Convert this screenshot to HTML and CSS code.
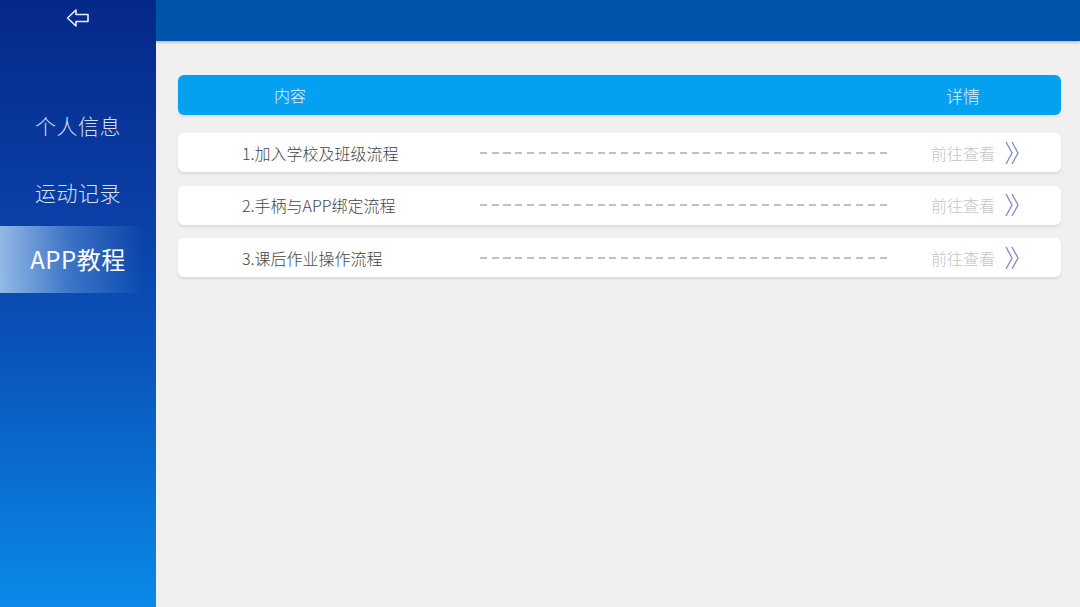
FILE: index.html
```html
<!DOCTYPE html>
<html lang="zh">
<head>
<meta charset="utf-8">
<title>APP教程</title>
<link rel="stylesheet" href="styles.css">
</head>
<body>
<div class="app">
  <aside class="sidebar">
    <div class="back">
      <svg width="24" height="20" viewBox="0 0 24 20" aria-hidden="true">
        <path d="M1.5 10 L10 2 L10 6.5 L22 6.5 L22 13.5 L10 13.5 L10 18 Z" fill="none" stroke="#e8eefa" stroke-width="1.6" stroke-linejoin="round"/>
      </svg>
    </div>
    <nav class="menu">
      <div class="menu-item">个人信息</div>
      <div class="menu-item">运动记录</div>
      <div class="menu-item active">APP教程</div>
    </nav>
  </aside>
  <main class="main">
    <header class="topbar"></header>
    <section class="content">
      <div class="table-head">
        <div class="col-title">内容</div>
        <div class="spacer"></div>
        <div class="col-detail">详情</div>
      </div>
      <div class="rows">
        <div class="row">
          <div class="row-title">1.加入学校及班级流程</div>
          <div class="dashes"></div>
          <div class="row-link">前往查看</div>
          <svg class="chev" width="16" height="26" viewBox="0 0 16 26" aria-hidden="true">
            <path d="M2 2 L8 13 L2 24 M8 2 L14 13 L8 24" fill="none" stroke="#7f88c2" stroke-width="1.3"/>
          </svg>
        </div>
        <div class="row">
          <div class="row-title">2.手柄与APP绑定流程</div>
          <div class="dashes"></div>
          <div class="row-link">前往查看</div>
          <svg class="chev" width="16" height="26" viewBox="0 0 16 26" aria-hidden="true">
            <path d="M2 2 L8 13 L2 24 M8 2 L14 13 L8 24" fill="none" stroke="#7f88c2" stroke-width="1.3"/>
          </svg>
        </div>
        <div class="row">
          <div class="row-title">3.课后作业操作流程</div>
          <div class="dashes"></div>
          <div class="row-link">前往查看</div>
          <svg class="chev" width="16" height="26" viewBox="0 0 16 26" aria-hidden="true">
            <path d="M2 2 L8 13 L2 24 M8 2 L14 13 L8 24" fill="none" stroke="#7f88c2" stroke-width="1.3"/>
          </svg>
        </div>
      </div>
    </section>
  </main>
</div>
</body>
</html>
```

FILE: styles.css
```css
* { box-sizing: border-box; }

html, body {
  margin: 0;
  padding: 0;
  width: 1080px;
  height: 607px;
  overflow: hidden;
  font-family: "Noto Sans CJK SC", "Noto Sans", sans-serif;
  font-weight: 300;
  background: #f0f0f0;
}

.app {
  display: flex;
  width: 1080px;
  height: 607px;
}

/* left navigation */
.sidebar {
  width: 156px;
  flex: none;
  display: flex;
  flex-direction: column;
  background: linear-gradient(180deg, #05288a 0%, #0a3fa6 35%, #0a56bb 60%, #0a8aea 100%);
}

.back {
  height: 92px;
  display: flex;
  justify-content: center;
  align-items: flex-start;
  padding-top: 8px;
}

.menu {
  display: flex;
  flex-direction: column;
}

.menu-item {
  height: 67px;
  display: flex;
  align-items: center;
  justify-content: center;
  color: #d6e2f4;
  font-size: 21px;
  letter-spacing: 0.5px;
  padding-bottom: 2px;
}

.menu-item.active {
  color: #ffffff;
  font-size: 24px;
  font-weight: 400;
  background: linear-gradient(90deg, rgba(170, 205, 240, 0.85) 0%, rgba(120, 170, 225, 0.45) 45%, rgba(20, 80, 180, 0) 92%);
}

/* right side */
.main {
  flex: 1;
  display: flex;
  flex-direction: column;
}

.topbar {
  height: 41px;
  flex: none;
  background: #0152ab;
  box-shadow: 0 1px 3px rgba(0, 40, 100, 0.35);
}

.content {
  padding: 34px 19px 0 22px;
}

.table-head {
  height: 40px;
  display: flex;
  align-items: center;
  background: #03a1ef;
  border-radius: 6px;
  color: #dff1fd;
  font-size: 16px;
  box-shadow: 0 2px 3px rgba(0, 0, 0, 0.08);
}

.col-title {
  width: 224px;
  text-align: center;
}

.spacer { flex: 1; }

.col-detail {
  width: 100px;
  margin-right: 48px;
  text-align: center;
  font-size: 17px;
}

.rows {
  margin-top: 18px;
  display: flex;
  flex-direction: column;
  gap: 13.5px;
}

.row {
  height: 39px;
  display: flex;
  align-items: center;
  background: #ffffff;
  border-radius: 6px;
  box-shadow: 0 2px 3px rgba(0, 0, 0, 0.09);
  padding-left: 64px;
}

.row-title {
  width: 238px;
  color: #454545;
  font-size: 16px;
  white-space: nowrap;
}

.dashes {
  width: 411px;
  height: 2px;
  background: repeating-linear-gradient(90deg, #c0c0c0 0 7px, transparent 7px 11.75px);
}

.row-link {
  margin-left: 40px;
  color: #c4c4cc;
  font-size: 16px;
}

.chev {
  margin-left: 9px;
}
```
